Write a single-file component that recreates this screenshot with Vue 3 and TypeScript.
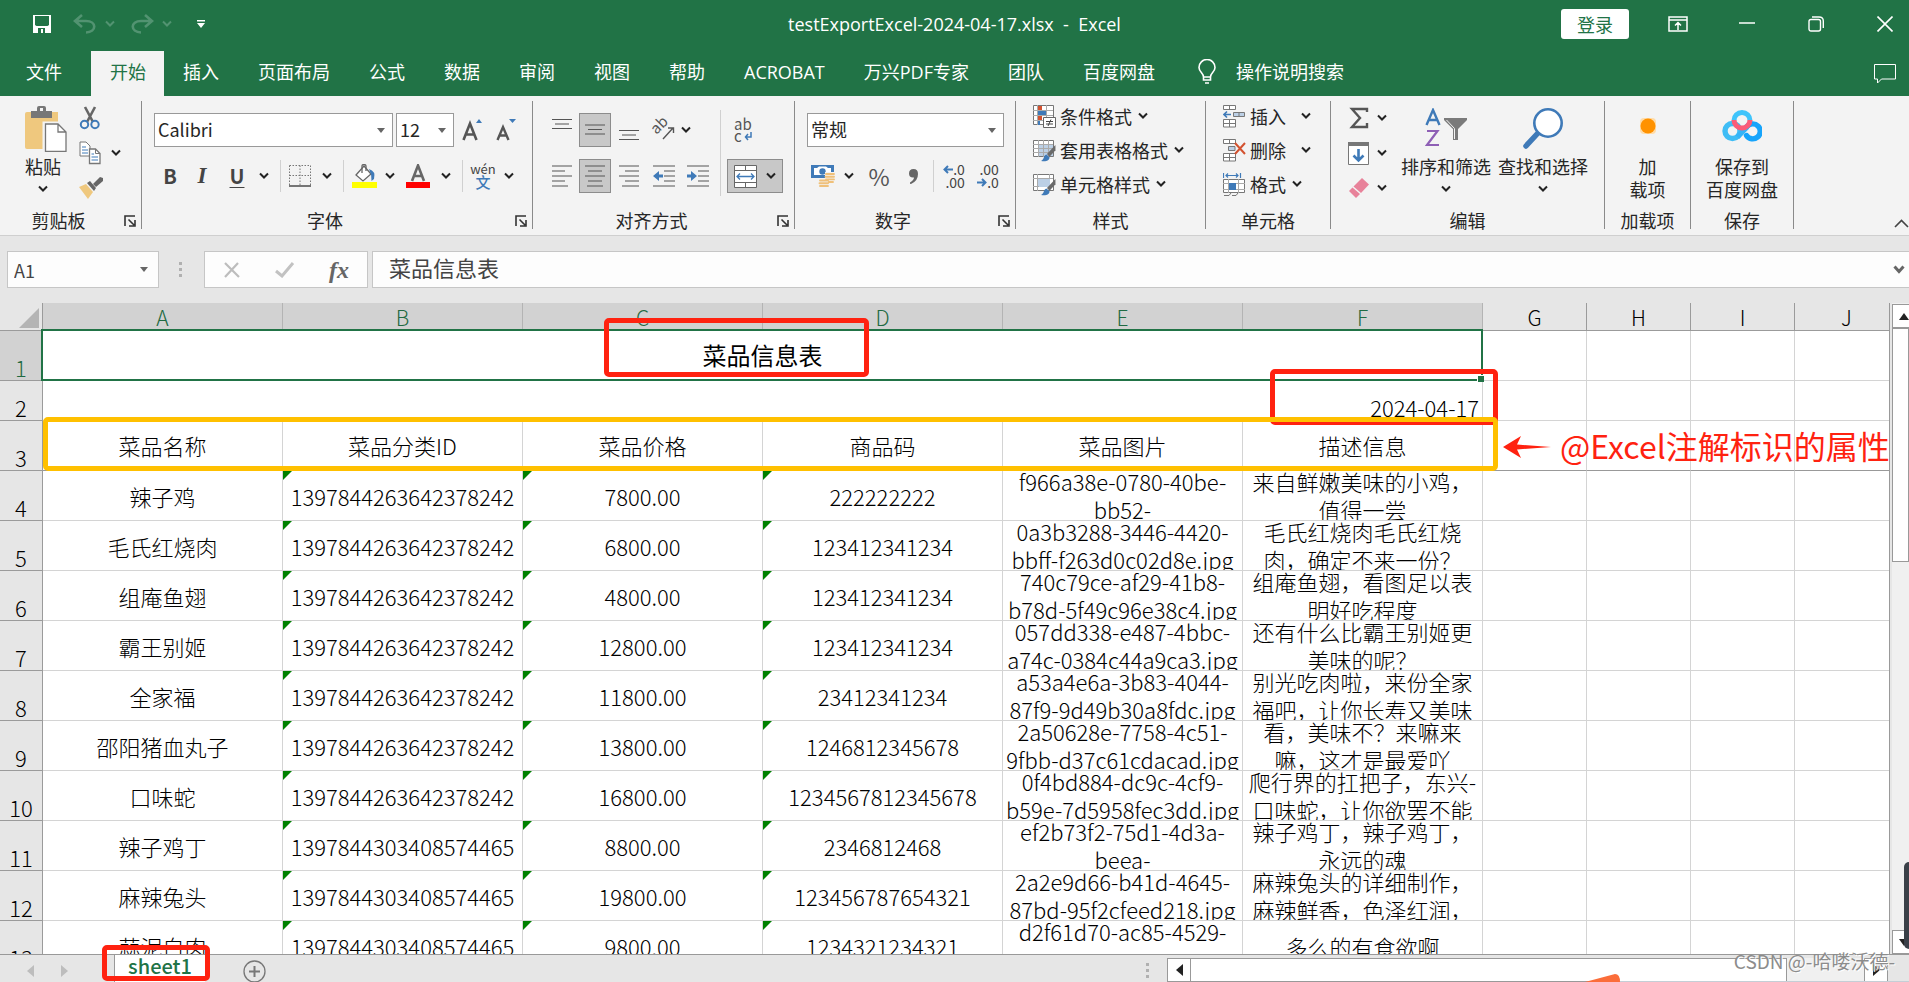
<script setup lang="ts">
interface Dish {
  row: number
  name: string
  category: string
  price: string
  code: string
  image: string[]
  note: string[]
}

const tabs: string[] = ['插入', '页面布局', '公式', '数据', '审阅', '视图', '帮助', 'ACROBAT', '万兴PDF专家', '团队', '百度网盘']
const selectedColumns: string[] = ['A', 'B', 'C', 'D', 'E', 'F']
const otherColumns: string[] = ['G', 'H', 'I', 'J']
const headings: string[] = ['菜品名称', '菜品分类ID', '菜品价格', '商品码', '菜品图片', '描述信息']

const first = '1397844263642378242'
const second = '1397844303408574465'

const dishes: Dish[] = [
  { row: 4, name: '辣子鸡', category: first, price: '7800.00', code: '222222222', image: ['f966a38e-0780-40be-', 'bb52-'], note: ['来自鲜嫩美味的小鸡，', '值得一尝'] },
  { row: 5, name: '毛氏红烧肉', category: first, price: '6800.00', code: '123412341234', image: ['0a3b3288-3446-4420-', 'bbff-f263d0c02d8e.jpg'], note: ['毛氏红烧肉毛氏红烧', '肉，确定不来一份？'] },
  { row: 6, name: '组庵鱼翅', category: first, price: '4800.00', code: '123412341234', image: ['740c79ce-af29-41b8-', 'b78d-5f49c96e38c4.jpg'], note: ['组庵鱼翅，看图足以表', '明好吃程度'] },
  { row: 7, name: '霸王别姬', category: first, price: '12800.00', code: '123412341234', image: ['057dd338-e487-4bbc-', 'a74c-0384c44a9ca3.jpg'], note: ['还有什么比霸王别姬更', '美味的呢？'] },
  { row: 8, name: '全家福', category: first, price: '11800.00', code: '23412341234', image: ['a53a4e6a-3b83-4044-', '87f9-9d49b30a8fdc.jpg'], note: ['别光吃肉啦，来份全家', '福吧，让你长寿又美味'] },
  { row: 9, name: '邵阳猪血丸子', category: first, price: '13800.00', code: '1246812345678', image: ['2a50628e-7758-4c51-', '9fbb-d37c61cdacad.jpg'], note: ['看，美味不？来嘛来', '嘛，这才是最爱吖'] },
  { row: 10, name: '口味蛇', category: first, price: '16800.00', code: '1234567812345678', image: ['0f4bd884-dc9c-4cf9-', 'b59e-7d5958fec3dd.jpg'], note: ['爬行界的扛把子，东兴-', '口味蛇，让你欲罢不能'] },
  { row: 11, name: '辣子鸡丁', category: second, price: '8800.00', code: '2346812468', image: ['ef2b73f2-75d1-4d3a-', 'beea-'], note: ['辣子鸡丁，辣子鸡丁，', '永远的魂'] },
  { row: 12, name: '麻辣兔头', category: second, price: '19800.00', code: '123456787654321', image: ['2a2e9d66-b41d-4645-', '87bd-95f2cfeed218.jpg'], note: ['麻辣兔头的详细制作，', '麻辣鲜香，色泽红润，'] },
  { row: 13, name: '蒜泥白肉', category: second, price: '9800.00', code: '1234321234321', image: ['d2f61d70-ac85-4529-'], note: ['多么的有食欲啊'] },
]
</script>

<template>
  <div class="window">
    <svg class="symbols" aria-hidden="true">
      <symbol id="chev" viewBox="0 0 10 8"><path d="M1 1.500 5 5.500 9 1.500" fill="none" stroke="currentColor" stroke-width="2" /></symbol>
      <symbol id="tri" viewBox="0 0 8 5"><path d="M0 0H8L4 5Z" fill="#666" /></symbol>
      <symbol id="launch" viewBox="0 0 12 12"><path d="M1 11V1H11M4.500 4.500 10 10M11 5V11H5" fill="none" stroke="#333" stroke-width="1.600" /></symbol>
      <symbol id="brush" viewBox="0 0 14 16"><path d="M13.500 0V5L8 11 5.500 8.500Z" fill="#6a6a6a" /><path d="M5 9 8 11.500C8 15 4 16 0 15 3 14 2 10 5 9Z" fill="#3f7ab8" /></symbol>
    </svg>

    <header class="titlebar">
      <div class="quick">
        <button class="plain save" aria-label="保存">
          <svg width="20" height="20" viewBox="0 0 20 20"><path d="M1 1H19V19H1Z" fill="#fff" /><path d="M3 2H17V11L15.500 12H4.500L3 11Z" fill="#217346" /><path d="M6 14H13V19H6Z" fill="#217346" /><path d="M9 15H11V19H9Z" fill="#fff" /></svg>
        </button>
        <button class="plain undo" aria-label="撤消">
          <svg width="24" height="20" viewBox="0 0 24 20"><path d="M9 1 2 7 9 13M2 7H13C24 7 24 18 13 18.500" fill="none" stroke="#529371" stroke-width="2.600" /></svg>
          <svg class="chev dim"><use href="#chev" /></svg>
        </button>
        <button class="plain redo" aria-label="恢复">
          <svg width="24" height="20" viewBox="0 0 24 20"><path d="M15 1 22 7 15 13M22 7H11C0 7 0 18 11 18.500" fill="none" stroke="#529371" stroke-width="2.600" /></svg>
          <svg class="chev dim"><use href="#chev" /></svg>
        </button>
        <button class="plain custom" aria-label="自定义快速访问工具栏">
          <svg width="8" height="8" viewBox="0 0 8 8"><path d="M0 0H8V1.500H0ZM0 3H8L4 8Z" fill="#fff" /></svg>
        </button>
      </div>
      <div class="doc">testExportExcel-2024-04-17.xlsx&nbsp; -&nbsp; Excel</div>
      <div class="controls">
        <button class="login">登录</button>
        <button class="plain ctl" aria-label="功能区显示选项">
          <svg width="20" height="16" viewBox="0 0 20 16"><path d="M1 1H19V15H1ZM1 4H19M10 14V7M7 9.500 10 6.500 13 9.500" fill="none" stroke="#fff" stroke-width="1.500" /></svg>
        </button>
        <button class="plain ctl" aria-label="最小化">
          <svg width="16" height="16" viewBox="0 0 16 16"><path d="M0 7H16" stroke="#fff" stroke-width="1.500" /></svg>
        </button>
        <button class="plain ctl" aria-label="还原">
          <svg width="16" height="16" viewBox="0 0 16 16" fill="none" stroke="#fff" stroke-width="1.400"><rect x="1" y="3.500" width="11.500" height="11.500" rx="2" /><path d="M4 1H11C14 1 15.300 2.500 15.300 5V12" /></svg>
        </button>
        <button class="plain ctl" aria-label="关闭">
          <svg width="16" height="16" viewBox="0 0 16 16"><path d="M0.500 0.500 15.500 15.500M15.500 0.500 0.500 15.500" stroke="#fff" stroke-width="1.600" /></svg>
        </button>
      </div>
    </header>

    <nav class="tabs">
      <button class="tab file">文件</button>
      <button class="tab active">开始</button>
      <button v-for="t in tabs" :key="t" class="tab">{{ t }}</button>
      <button class="tab tell">
        <svg width="18" height="25" viewBox="0 0 18 25" fill="none" stroke="#fff" stroke-width="1.600"><path d="M5.500 18C5.500 14 1 13 1 8.500A8 8 0 0 1 17 8.500C17 13 12.500 14 12.500 18ZM5.500 18V21H12.500V18M7 24H11" /></svg>
        <span>操作说明搜索</span>
      </button>
      <button class="plain comment" aria-label="批注">
        <svg width="22" height="20" viewBox="0 0 22 20"><path d="M0.500 0.500H21.500V15H7.500L3.500 19V15H0.500Z" fill="none" stroke="#fff" /></svg>
      </button>
    </nav>

    <section class="ribbon">
      <div class="group g-clip">
        <div class="body">
          <button class="big paste">
            <span class="pic"><svg width="42" height="46" viewBox="0 0 42 46"><path d="M2 6H33V43H2Q0 43 0 41V8Q0 6 2 6Z" fill="#efc87e" /><path d="M6 12V5H12V2Q12 0 14 0H19Q21 0 21 2V5H27V12Z" fill="#777" /><path d="M15 2H18V5H15Z" fill="#f3f3f3" /><path d="M19 17H33L41 25V45.500H19Z" fill="#fff" stroke="#f3f3f3" stroke-width="3" /><path d="M20.500 18H33L41 26V45.300H20.500ZM33 18V26H41" fill="#fff" stroke="#777" stroke-width="1.300" /></svg></span>
            <span>粘贴</span>
            <svg class="chev"><use href="#chev" /></svg>
          </button>
          <div class="stack clip-stack">
            <button class="plain" aria-label="剪切"><svg width="22" height="24" viewBox="0 0 22 24"><path d="M6 1 14 16M16 1 8 16" stroke="#666" stroke-width="2.600" /><circle cx="5.500" cy="18.500" r="3.700" fill="none" stroke="#3f7ab8" stroke-width="2" /><circle cx="16" cy="18.500" r="3.700" fill="none" stroke="#3f7ab8" stroke-width="2" /></svg></button>
            <button class="plain" aria-label="复制"><svg width="22" height="24" viewBox="0 0 22 24"><path d="M1 1H7L11 5V15H1Z" fill="#fff" stroke="#777" /><path d="M3 6H7M3 9H9M3 12H9" stroke="#3f7ab8" /><path d="M10.500 8H16.500L21 12.500V22.500H10.500Z" fill="#fff" stroke="#777" stroke-width="1.300" /><path d="M16.500 8V12.500H21" fill="none" stroke="#777" /><path d="M12.500 13H15M12.500 16H19M12.500 19H19" stroke="#3f7ab8" stroke-width="1.200" /></svg><svg class="chev"><use href="#chev" /></svg></button>
            <button class="plain" aria-label="格式刷"><svg width="24" height="22" viewBox="0 0 24 22"><path d="M0 10 7 7 14 15 9 22Z" fill="#efc87e" /><path d="M8 6 11 4 17 11 15 14Z" fill="#666" /><path d="M14 7 21 0 24 1V4L17 10Z" fill="#666" /></svg></button>
          </div>
        </div>
        <div class="caption"><span>剪贴板</span><svg class="launch"><use href="#launch" /></svg></div>
      </div>

      <div class="group g-font">
        <div class="body lines">
          <div class="row">
            <label class="combo family"><select aria-label="字体"><option>Calibri</option></select><svg class="tri"><use href="#tri" /></svg></label>
            <label class="combo size"><select aria-label="字号"><option>12</option></select><svg class="tri"><use href="#tri" /></svg></label>
            <button class="plain grow" aria-label="增大字号"><svg width="21" height="24" viewBox="0 0 21 24"><path d="M1.500 22 8 5.500 14.500 22M4 16.500H12" fill="none" stroke="#555" stroke-width="2.600" /><path d="M14 5 17 1 20 5Z" fill="#3f7ab8" /></svg></button>
            <button class="plain grow" aria-label="减小字号"><svg width="21" height="24" viewBox="0 0 21 24"><path d="M1.500 22 7 9 12.500 22M4 17.500H10" fill="none" stroke="#555" stroke-width="2.400" /><path d="M13 1H20L16.500 5Z" fill="#3f7ab8" /></svg></button>
          </div>
          <div class="font-tools">
            <button class="plain bold">B</button>
            <button class="plain italic">I</button>
            <button class="plain under">U</button>
            <svg class="chev"><use href="#chev" /></svg>
            <i class="bar"></i>
            <button class="plain" aria-label="边框"><svg width="22" height="22" viewBox="0 0 22 22"><path d="M0.500 0.500H21.500M0.500 10.500H21.500M0.500 0.500V20M11 0.500V20M21.500 0.500V20" fill="none" stroke="#777" stroke-dasharray="1.500 1.500" /><path d="M0 21H22" stroke="#555" stroke-width="1.600" /></svg></button>
            <svg class="chev"><use href="#chev" /></svg>
            <i class="bar"></i>
            <button class="plain" aria-label="填充颜色"><svg width="25" height="24" viewBox="0 0 25 24"><path d="M0 18H25V24H0Z" fill="#ff0" /><path d="M12 2 19 10 11 17 4 11Z" fill="#fff" stroke="#666" stroke-width="1.300" /><path d="M10 9V2Q10 0.500 12 0.500T14 2V7" fill="none" stroke="#666" stroke-width="1.300" /><path d="M17 5Q24 7 22 15L19.500 17Q20 11 17 5Z" fill="#3f7ab8" /></svg></button>
            <svg class="chev"><use href="#chev" /></svg>
            <button class="plain" aria-label="字体颜色"><svg width="24" height="24" viewBox="0 0 24 24"><path d="M6 17 12 1.500 18 17M8 12H16" fill="none" stroke="#666" stroke-width="2.600" /><path d="M0 18H24V24H0Z" fill="#f00" /></svg></button>
            <svg class="chev"><use href="#chev" /></svg>
            <i class="bar"></i>
            <button class="plain pinyin"><span>wén</span><b>文</b></button>
            <svg class="chev"><use href="#chev" /></svg>
          </div>
        </div>
        <div class="caption"><span>字体</span><svg class="launch"><use href="#launch" /></svg></div>
      </div>

      <div class="group g-align">
        <div class="body">
          <div class="align-tools">
            <button class="plain" aria-label="顶端对齐"><svg width="20" height="24" viewBox="0 0 20 24"><path d="M0 1.500H20M3 6H17M0 10.500H20" stroke="#555" stroke-width="1.200" /></svg></button>
            <button class="on" aria-label="垂直居中"><svg width="20" height="24" viewBox="0 0 20 24"><path d="M0 7H20M3 11.500H17M0 16H20" stroke="#555" stroke-width="1.200" /></svg></button>
            <button class="plain" aria-label="底端对齐"><svg width="20" height="24" viewBox="0 0 20 24"><path d="M0 12.500H20M3 17H17M0 21.500H20" stroke="#555" stroke-width="1.200" /></svg></button>
            <button class="plain" aria-label="方向"><svg class="orient" width="22" height="22" viewBox="0 0 22 22"><text x="4" y="15" font-size="15" fill="#555" transform="rotate(-45 5 16)">ab</text><path d="M10 20 20 9M15 9H20.500V14" fill="none" stroke="#555" stroke-width="1.400" /></svg></button>
            <svg class="chev near"><use href="#chev" /></svg>
            <button class="plain" aria-label="左对齐"><svg width="20" height="22" viewBox="0 0 20 22"><path d="M0 1H20M0 6H13M0 11H20M0 16H13M0 21H16" stroke="#555" stroke-width="1.200" /></svg></button>
            <button class="on" aria-label="居中"><svg width="20" height="22" viewBox="0 0 20 22"><path d="M0 1H20M3 6H17M0 11H20M3 16H17M2 21H18" stroke="#555" stroke-width="1.200" /></svg></button>
            <button class="plain" aria-label="右对齐"><svg width="20" height="22" viewBox="0 0 20 22"><path d="M0 1H20M6 6H20M0 11H20M6 16H20M3 21H20" stroke="#555" stroke-width="1.200" /></svg></button>
            <button class="plain" aria-label="减少缩进"><svg width="22" height="22" viewBox="0 0 22 22"><path d="M0 1H22M11 6H22M11 11H22M11 16H22M0 21H22" stroke="#555" stroke-width="1.200" /><path d="M0 11 6 6V9.500H10V12.500H6V16Z" fill="#3f7ab8" /></svg></button>
            <button class="plain" aria-label="增加缩进"><svg width="22" height="22" viewBox="0 0 22 22"><path d="M0 1H22M11 6H22M11 11H22M11 16H22M0 21H22" stroke="#555" stroke-width="1.200" /><path d="M10 11 4 6V9.500H0V12.500H4V16Z" fill="#3f7ab8" /></svg></button>
          </div>
          <i class="bar tall"></i>
          <div class="wrap-tools">
            <button class="plain wrap" aria-label="自动换行"><span>ab</span><span>c<svg width="8" height="9" viewBox="0 0 8 9"><path d="M7 0V5H2M4 2 1.500 5 4 8" fill="none" stroke="#3f7ab8" stroke-width="1.500" /></svg></span></button>
            <button class="on merge" aria-label="合并后居中"><svg width="23" height="23" viewBox="0 0 23 23"><path d="M0.500 0.500H22.500V22.500H0.500Z" fill="#fff" stroke="#666" /><path d="M0 5.500H23M0 17.500H23M11.500 0V5.500M11.500 17.500V23" stroke="#666" /><path d="M3 11.500H20M6 8.500 3 11.500 6 14.500M17 8.500 20 11.500 17 14.500" fill="none" stroke="#3f7ab8" stroke-width="1.300" /></svg><svg class="chev"><use href="#chev" /></svg></button>
          </div>
        </div>
        <div class="caption"><span>对齐方式</span><svg class="launch"><use href="#launch" /></svg></div>
      </div>

      <div class="group g-num">
        <div class="body lines">
          <label class="combo number"><select aria-label="数字格式"><option>常规</option></select><svg class="tri"><use href="#tri" /></svg></label>
          <div class="num-tools">
            <button class="plain" aria-label="会计数字格式"><svg width="24" height="24" viewBox="0 0 24 24"><path d="M0 1H23V14H0Z" fill="#3f7ab8" /><path d="M3 4H6L8 2.500H15L17 4H20V11H3Z" fill="#fff" /><circle cx="11.500" cy="7.500" r="3.200" fill="#3f7ab8" /><path d="M14 8H24V19H18V24H7V14.500H14Z" fill="#f3f3f3" /><path d="M15 10H23M14.500 12.700H23M15 15.400H23M18 18H22M9 16.500H17M8.500 19.300H17M9 22H17" stroke="#efc07a" stroke-width="1.900" stroke-linecap="round" /></svg></button>
            <svg class="chev"><use href="#chev" /></svg>
            <button class="plain percent">%</button>
            <button class="plain" aria-label="千位分隔样式"><svg width="9" height="15" viewBox="0 0 9 15"><path d="M4.500 0Q9 0 9 5 9 12 2 15 0.500 15 1 13.500 5 11 5 8.500 0 9 0 4.500 0 0 4.500 0Z" fill="#666" /></svg></button>
            <i class="bar"></i>
            <button class="plain decimals" aria-label="增加小数位数"><span><svg width="10" height="9" viewBox="0 0 10 9"><path d="M10 4.500H2M5 1 1.500 4.500 5 8" fill="none" stroke="#3f7ab8" stroke-width="2" /></svg>.0</span><span>.00</span></button>
            <button class="plain decimals" aria-label="减少小数位数"><span>.00</span><span><svg width="10" height="9" viewBox="0 0 10 9"><path d="M0 4.500H8M5 1 8.500 4.500 5 8" fill="none" stroke="#3f7ab8" stroke-width="2" /></svg>.0</span></button>
          </div>
        </div>
        <div class="caption"><span>数字</span><svg class="launch"><use href="#launch" /></svg></div>
      </div>

      <div class="group g-style">
        <div class="body list">
          <button class="item"><svg width="23" height="23" viewBox="0 0 23 23"><path d="M0.500 0.500H20.500V19.500H0.500Z" fill="#fff" stroke="#777" /><path d="M4.500 0V20M13.500 0V20M0 5.500H20M0 10.500H20M0 15.500H20" stroke="#aaa" /><path d="M5 1H9V5H5ZM5 11H9V15H5Z" fill="#d35230" /><path d="M5 6H13V10H5ZM5 16H7V20H5Z" fill="#3f7ab8" /><path d="M10.500 12.500H22.500V22.500H10.500Z" fill="#fff" stroke="#666" /><path d="M13 16.500H20M13 19H20M18 14.500 15 21" stroke="#444" /></svg>条件格式<svg class="chev"><use href="#chev" /></svg></button>
          <button class="item"><svg width="23" height="23" viewBox="0 0 23 23"><path d="M0.500 1.500H20.500V17.500H0.500Z" fill="#fff" stroke="#777" /><path d="M6 6H20V17H6Z" fill="#bcd0e6" /><path d="M5.500 1V18M10.500 1V18M15.500 1V18M0 5.500H20M0 9.500H20M0 13.500H20" stroke="#aaa" /><use href="#brush" x="8" y="6" width="15" height="17" /></svg>套用表格格式<svg class="chev"><use href="#chev" /></svg></button>
          <button class="item"><svg width="23" height="23" viewBox="0 0 23 23"><path d="M0.500 1.500H20.500V17.500H0.500Z" fill="#fff" stroke="#777" /><path d="M5 5H17V14H5Z" fill="#bcd0e6" /><path d="M4.500 1V18M16.500 1V5M0 5.500H20M0 13.500H6" stroke="#aaa" /><use href="#brush" x="8" y="6" width="15" height="17" /></svg>单元格样式<svg class="chev"><use href="#chev" /></svg></button>
        </div>
        <div class="caption"><span>样式</span></div>
      </div>

      <div class="group g-cell">
        <div class="body list">
          <button class="item"><svg width="23" height="23" viewBox="0 0 23 23"><path d="M0.500 0.500H12.500V4.500H0.500ZM6.500 0V5M0.500 14.500H12.500V22H0.500ZM6.500 14V22M0.500 18.500H12.500" fill="#fff" stroke="#777" /><path d="M10.500 7.500H21.500V11.500H10.500Z" fill="#bcd0e6" stroke="#777" /><path d="M16 7V12" stroke="#777" /><path d="M8 9.500H1M4 6.500 1 9.500 4 12.500" fill="none" stroke="#3f7ab8" stroke-width="1.600" /></svg>插入<svg class="chev far"><use href="#chev" /></svg></button>
          <button class="item"><svg width="23" height="23" viewBox="0 0 23 23"><path d="M0.500 0.500H12.500V4.500H0.500ZM6.500 0V5M0.500 14.500H12.500V22H0.500ZM6.500 14V22M0.500 18.500H12.500" fill="#fff" stroke="#777" /><path d="M5.500 7.500H12V11.500H5.500Z" fill="#bcd0e6" stroke="#777" /><path d="M12 4 22 15M22 4 12 15" stroke="#d35230" stroke-width="2" /></svg>删除<svg class="chev far"><use href="#chev" /></svg></button>
          <button class="item"><svg width="23" height="23" viewBox="0 0 23 23"><path d="M0.500 6.500H21.500V19.500H0.500Z" fill="#fff" stroke="#777" /><path d="M5.500 6V20M15.500 6V20M0 10.500H22M0 16.500H22" stroke="#aaa" /><path d="M6 10H13V17H6Z" fill="#3f7ab8" /><path d="M0.500 0V5M17.500 0V5M3 2.500H15M5 0.500 3 2.500 5 4.500M13 0.500 15 2.500 13 4.500" fill="none" stroke="#3f7ab8" stroke-width="1.200" /><path d="M1 22.500H6L8 20M9 22.500H13L15 20" fill="none" stroke="#777" /></svg>格式<svg class="chev"><use href="#chev" /></svg></button>
        </div>
        <div class="caption"><span>单元格</span></div>
      </div>

      <div class="group g-edit">
        <div class="body">
          <div class="stack edit-stack">
            <button class="plain" aria-label="自动求和"><svg width="22" height="22" viewBox="0 0 22 22"><path d="M19 5V2H4L12 11 4 20H19V16" fill="none" stroke="#555" stroke-width="2.400" /></svg><svg class="chev"><use href="#chev" /></svg></button>
            <button class="plain" aria-label="填充"><svg width="22" height="23" viewBox="0 0 22 23"><path d="M0.500 0.500H20.500V22.500H0.500Z" fill="#fff" stroke="#777" /><path d="M0 0H21V4H0Z" fill="#777" /><path d="M10.500 7V18M5.500 13.500 10.500 18.500 15.500 13.500" fill="none" stroke="#3f7ab8" stroke-width="2.600" /></svg><svg class="chev"><use href="#chev" /></svg></button>
            <button class="plain" aria-label="清除"><svg width="22" height="22" viewBox="0 0 22 22"><path d="M14 1 21 7.500 13 16 5.500 9.500Z" fill="#e8829a" /><path d="M4.500 10.500 12 17 8 21 1 14Z" fill="#e8829a" /></svg><svg class="chev"><use href="#chev" /></svg></button>
          </div>
          <button class="big sort">
            <span class="pic"><svg width="42" height="40" viewBox="0 0 42 40"><path d="M1.500 17 8 2 14.500 17M4 12H12" fill="none" stroke="#3f7ab8" stroke-width="2.400" /><path d="M2 23H12.500L2 37H14" fill="none" stroke="#8e5fb5" stroke-width="2.200" /><path d="M19 10H42V12L33 21V32H28V21L19 12Z" fill="#7a7a7a" /><path d="M21.500 12 29.500 20.500V31" fill="none" stroke="#f3f3f3" /></svg></span>
            <span>排序和筛选</span>
            <svg class="chev"><use href="#chev" /></svg>
          </button>
          <button class="big">
            <span class="pic"><svg width="40" height="41" viewBox="0 0 40 41"><path d="M3 38 15 25" stroke="#3f7ab8" stroke-width="5.500" stroke-linecap="round" /><circle cx="25" cy="15" r="13.700" fill="#fff" stroke="#3f7ab8" stroke-width="2.600" /></svg></span>
            <span>查找和选择</span>
            <svg class="chev"><use href="#chev" /></svg>
          </button>
        </div>
        <div class="caption"><span>编辑</span></div>
      </div>

      <div class="group g-add">
        <div class="body center">
          <button class="big"><span class="pic"><svg width="18" height="18" viewBox="0 0 18 18"><rect x="1" y="1" width="16" height="16" rx="4" fill="#ffdca8" /><circle cx="9" cy="9" r="7.500" fill="#ff9200" /></svg></span><span>加<br />载项</span></button>
        </div>
        <div class="caption"><span>加载项</span></div>
      </div>

      <div class="group g-save">
        <div class="body center">
          <button class="big">
            <span class="pic"><svg width="40" height="32" viewBox="0 0 40 32" fill="none" stroke-width="5.400"><circle cx="10.500" cy="21" r="7.500" stroke="#3fbdf5" /><path d="M15.500 27 25 17" stroke="#35b4f7" /><path d="M25 16.500A7.500 7.500 0 1 1 24.500 25.500" stroke="#16a4fb" stroke-linecap="round" /><path d="M12 10.500A8 8 0 1 1 28 10.500" stroke="#3fc4fb" stroke-width="5" /><path d="M12 10A8 8 0 0 0 28 10" stroke="#fb5b78" stroke-width="5" /></svg></span>
            <span>保存到<br />百度网盘</span>
          </button>
        </div>
        <div class="caption"><span>保存</span></div>
      </div>

      <button class="plain collapse" aria-label="折叠功能区"><svg width="15" height="9" viewBox="0 0 15 9"><path d="M1 8 7.500 1.500 14 8" fill="none" stroke="#444" stroke-width="1.600" /></svg></button>
    </section>

    <section class="formula">
      <label class="namebox"><input value="A1" aria-label="名称框" /><svg class="tri"><use href="#tri" /></svg></label>
      <i class="grip"></i>
      <div class="fx">
        <button class="plain" aria-label="取消"><svg width="18" height="16" viewBox="0 0 18 16"><path d="M2 1 16 15M15 1 2 15" stroke="#bdbdbd" stroke-width="2.200" /></svg></button>
        <button class="plain" aria-label="输入"><svg width="20" height="16" viewBox="0 0 20 16"><path d="M1 9 7 14 18 1" fill="none" stroke="#c2c2c2" stroke-width="3" /></svg></button>
        <button class="plain fn">fx</button>
      </div>
      <label class="entry"><input value="菜品信息表" aria-label="编辑栏" /><svg width="12" height="9" viewBox="0 0 12 9"><path d="M1.500 1.500 6 6.500 10.500 1.500" fill="none" stroke="#666" stroke-width="3" /></svg></label>
    </section>

    <main class="sheet">
      <div class="grid">
        <table>
          <colgroup>
            <col class="c-head" />
            <col v-for="c in selectedColumns" :key="c" class="c-wide" />
            <col v-for="c in otherColumns" :key="c" class="c-std" />
          </colgroup>
          <thead>
            <tr>
              <th class="corner"><svg width="20" height="20" viewBox="0 0 20 20"><path d="M20 0V20H0Z" fill="#b4b4b4" /></svg></th>
              <th v-for="c in selectedColumns" :key="c" class="col picked">{{ c }}</th>
              <th v-for="c in otherColumns" :key="c" class="col">{{ c }}</th>
            </tr>
          </thead>
          <tbody>
            <tr class="r50">
              <th class="rowno picked">1</th>
              <td colspan="6" class="active-cell">菜品信息表<i class="handle"></i></td>
              <td v-for="c in otherColumns" :key="c"></td>
            </tr>
            <tr class="r40">
              <th class="rowno">2</th>
              <td colspan="6" class="date">2024-04-17</td>
              <td v-for="c in otherColumns" :key="c"></td>
            </tr>
            <tr class="r50 frozen">
              <th class="rowno">3</th>
              <td v-for="h in headings" :key="h">{{ h }}</td>
              <td v-for="c in otherColumns" :key="c"></td>
            </tr>
            <tr v-for="d in dishes" :key="d.row" class="r50">
              <th class="rowno">{{ d.row }}</th>
              <td>{{ d.name }}</td>
              <td class="flag">{{ d.category }}</td>
              <td class="flag">{{ d.price }}</td>
              <td class="flag">{{ d.code }}</td>
              <td class="multi"><div><p v-for="l in d.image" :key="l">{{ l }}</p></div></td>
              <td :class="{ multi: d.note.length > 1 }"><div><p v-for="l in d.note" :key="l">{{ l }}</p></div></td>
              <td v-for="c in otherColumns" :key="c"></td>
            </tr>
          </tbody>
        </table>
      </div>
      <div class="vscroll">
        <button class="sb up" aria-label="向上滚动"><svg width="10" height="7" viewBox="0 0 10 7"><path d="M0 7 5 0 10 7Z" fill="#222" /></svg></button>
        <div class="vthumb"></div>
        <button class="sb down" aria-label="向下滚动"><svg width="10" height="7" viewBox="0 0 10 7"><path d="M0 0H10L5 7Z" fill="#222" /></svg></button>
      </div>
    </main>

    <footer class="sheetbar">
      <button class="plain nav" aria-label="上一张"><svg width="7" height="12" viewBox="0 0 7 12"><path d="M7 0V12L0 6Z" fill="#bdbdbd" /></svg></button>
      <button class="plain nav" aria-label="下一张"><svg width="7" height="12" viewBox="0 0 7 12"><path d="M0 0V12L7 6Z" fill="#bdbdbd" /></svg></button>
      <button class="sheet-tab">sheet1</button>
      <button class="plain add" aria-label="新工作表"><svg width="23" height="23" viewBox="0 0 23 23" fill="none" stroke="#777"><circle cx="11.500" cy="11.500" r="10.500" stroke-width="1.300" /><path d="M6 11.500H17M11.500 6V17" stroke-width="2" /></svg></button>
      <i class="grip low"></i>
      <div class="hscroll">
        <button class="sb" aria-label="向左滚动"><svg width="7" height="12" viewBox="0 0 7 12"><path d="M7 0V12L0 6Z" fill="#222" /></svg></button>
        <div class="hthumb"></div>
        <div class="htrack"></div>
        <button class="sb" aria-label="向右滚动"><svg width="7" height="12" viewBox="0 0 7 12"><path d="M0 0V12L7 6Z" fill="#222" /></svg></button>
      </div>
    </footer>

    <div class="mark red m-title"></div>
    <div class="mark red m-date"></div>
    <div class="mark yellow m-head"></div>
    <div class="mark red m-sheet"></div>
    <div class="remark">
      <svg width="48" height="22" viewBox="0 0 48 22"><path d="M0 11 18 0 14 8.500 48 11 14 13.500 18 22Z" fill="#ff2210" /></svg>
      <span>@Excel注解标识的属性</span>
    </div>
    <div class="edge-handle"></div>
    <svg class="corner-note" width="324" height="8" viewBox="0 0 324 8"><path d="M0 8 30 0Q35 0 35 8Z" fill="#fb6d3a" /><path d="M35 7.500H324" stroke="#c5ced6" /></svg>
    <div class="watermark">CSDN @-哈喽沃德-</div>
  </div>
</template>

<style>
body {
  margin: 0;
  overflow: hidden;
}
</style>

<style scoped>
.window {
  position: relative;
  display: flex;
  flex-direction: column;
  width: 100%;
  height: 100vh;
  overflow: hidden;
  background: #e6e6e6;
  color: #262626;
  font: 18px/24px "Noto Sans CJK SC", sans-serif;
}
.window *,
.window {
  box-sizing: border-box;
}
.symbols {
  position: absolute;
  width: 0;
  height: 0;
}
button,
input,
select {
  margin: 0;
  padding: 0;
  border: 0;
  outline: 0;
  background: none;
  color: inherit;
  font: inherit;
}
svg {
  display: block;
  flex: none;
}
p {
  margin: 0;
}
.plain {
  display: flex;
  align-items: center;
  justify-content: center;
}
.chev {
  width: 10px;
  height: 8px;
  color: #222;
}
.chev.dim {
  color: #529371;
}
.tri {
  width: 8px;
  height: 5px;
}

/* title bar */
.titlebar {
  display: grid;
  grid-template-columns: 1fr auto 1fr;
  align-items: center;
  flex: none;
  height: 51px;
  padding-bottom: 3px;
  background: #217346;
  color: #fff;
}
.doc {
  font-family: "Open Sans", "Noto Sans CJK SC", sans-serif;
}
.quick {
  display: flex;
  align-items: center;
  padding-left: 32px;
}
.undo,
.redo {
  gap: 8px;
}
.undo {
  margin-left: 21px;
}
.redo {
  margin-left: 15px;
}
.custom {
  margin-left: 25px;
}
.controls {
  display: flex;
  justify-content: flex-end;
  align-items: center;
}
.login {
  width: 68px;
  height: 30px;
  margin-right: 14px;
  padding-bottom: 1px;
  border-radius: 3px;
  background: #fff;
  color: #217346;
}
.ctl {
  width: 69px;
  height: 46px;
}
.ctl:last-child {
  width: 48px;
  margin-left: 11px;
}

/* tabs */
.tabs {
  display: flex;
  flex: none;
  height: 45px;
  background: #217346;
  font-family: "Open Sans", "Noto Sans CJK SC", sans-serif;
}
.tab {
  padding: 0 20px 4px 19px;
  color: #fff;
  white-space: nowrap;
}
.file {
  width: 91px;
  padding: 0 26px 4px;
  text-align: left;
}
.active {
  padding-right: 18px;
  background: #f3f3f3;
  color: #217346;
}
.tell {
  display: flex;
  align-items: center;
  gap: 20px;
  margin-left: 4px;
}
.comment {
  margin-left: auto;
  margin-right: 13px;
}

/* ribbon */
.ribbon {
  display: flex;
  flex: none;
  height: 140px;
  padding: 5px 0 6px;
  border-bottom: 1px solid #cfcfcf;
  background: #f3f3f3;
}
.group {
  display: flex;
  flex-direction: column;
  flex: none;
  border-right: 1px solid #8a8a8a;
}
.body {
  display: flex;
  flex: 1;
  min-height: 0;
}
.caption {
  display: flex;
  align-items: center;
  flex: none;
  height: 18px;
  padding-right: 5px;
}
.caption span {
  flex: 1;
  text-align: center;
}
.launch {
  width: 12px;
  height: 12px;
  margin: 2px 0 0 7px;
}
.g-clip {
  width: 142px;
}
.g-font {
  width: 391px;
}
.g-align {
  width: 262px;
}
.g-num {
  width: 221px;
}
.g-style {
  width: 190px;
}
.g-cell {
  width: 125px;
}
.g-edit {
  width: 274px;
}
.g-add {
  width: 86px;
}
.g-save {
  width: 103px;
}
.g-style .caption,
.g-cell .caption,
.g-edit .caption,
.g-add .caption,
.g-save .caption {
  padding-right: 0;
}
.big {
  display: flex;
  flex-direction: column;
  align-items: center;
  line-height: 23px;
}
.pic {
  display: flex;
  align-items: center;
  justify-content: center;
  height: 54px;
}
.big .chev {
  margin-top: 7px;
}
.g-add .pic,
.g-save .pic {
  height: 50px;
  margin-bottom: 4px;
}
.paste {
  width: 52px;
  margin-left: 17px;
}
.paste .pic {
  height: 56px;
  margin-bottom: -2px;
  padding-left: 6px;
}
.sort {
  width: 90px;
  margin: 0 7px 0 14px;
}
.center {
  justify-content: center;
}
.stack {
  display: flex;
  flex-direction: column;
  gap: 11px;
  padding-top: 5px;
}
.stack button {
  height: 24px;
  justify-content: flex-start;
}
.clip-stack {
  padding-left: 10px;
}
.clip-stack .chev {
  margin-left: 10px;
}
.edit-stack {
  padding-left: 17px;
}
.edit-stack .chev {
  margin-left: 7px;
}
.lines {
  flex-direction: column;
  gap: 12px;
  padding: 12px 0 0 12px;
}
.row {
  display: flex;
  align-items: center;
}
.combo {
  position: relative;
  display: block;
  height: 34px;
  border: 1px solid #999;
  background: #fff;
}
.combo select {
  width: 100%;
  height: 100%;
  padding: 0 0 2px 3px;
  appearance: none;
}
.combo .tri {
  position: absolute;
  top: 14px;
  right: 7px;
}
.family {
  width: 239px;
}
.size {
  width: 58px;
  margin-left: 3px;
}
.number {
  width: 197px;
}
.grow {
  margin-left: 8px;
  width: 21px;
}
.grow + .grow {
  margin-left: 13px;
}
.font-tools {
  display: grid;
  grid-template-columns: 32px 32px 38px 16px 16px 24px 30px 2px 40px 12px 44px 12px 20px 22px 30px;
  align-items: center;
  justify-items: center;
  height: 34px;
}
.bar {
  width: 1px;
  height: 32px;
  background: #d0d0d0;
}
.bold,
.under {
  color: #444;
  font-weight: 700;
  font-size: 20px;
}
.under {
  text-decoration: underline;
  text-decoration-thickness: 1px;
  text-underline-offset: 3px;
}
.italic {
  color: #444;
  font: italic 700 23px/24px "Liberation Serif", serif;
}
.pinyin {
  flex-direction: column;
  color: #444;
  font-size: 13px;
  line-height: 11px;
}
.pinyin b {
  color: #3f7ab8;
  font-size: 15px;
  line-height: 15px;
  font-weight: 500;
}
.align-tools {
  display: grid;
  grid-template-columns: 35px 32px 36px 34px 34px;
  grid-auto-rows: 34px;
  row-gap: 12px;
  align-items: center;
  justify-items: center;
  padding: 12px 0 0 11px;
  box-sizing: content-box;
}
.near {
  justify-self: start;
}
.orient {
  overflow: visible;
}
.on {
  display: flex;
  align-items: center;
  justify-content: center;
  width: 32px;
  height: 34px;
  border: 1px solid #8c8c8c;
  background: #c8c8c8;
}
.bar.tall {
  height: 86px;
  margin: 9px 6px 0 5px;
}
.wrap-tools {
  display: flex;
  flex-direction: column;
  gap: 12px;
  padding-top: 12px;
}
.wrap {
  flex-direction: column;
  align-items: flex-start;
  width: 32px;
  height: 34px;
  padding-left: 7px;
  color: #555;
  font-size: 15px;
  line-height: 12px;
}
.wrap span {
  display: flex;
  align-items: center;
  gap: 2px;
}
.merge {
  width: 56px;
  gap: 9px;
}
.num-tools {
  display: grid;
  grid-template-columns: 32px 20px 40px 28px 12px 30px 38px;
  align-items: center;
  justify-items: center;
  height: 34px;
}
.percent {
  color: #555;
  font-size: 23px;
}
.decimals {
  flex-direction: column;
  align-items: flex-end;
  color: #444;
  font-size: 14px;
  line-height: 13px;
}
.decimals span {
  display: flex;
  align-items: center;
}
.list {
  flex-direction: column;
  padding: 0 0 0 17px;
}
.item {
  display: flex;
  align-items: center;
  gap: 4px;
  height: 34px;
  padding-bottom: 4px;
}
.item .chev {
  margin-left: 2px;
}
.item .far {
  margin-left: 11px;
}
.collapse {
  align-self: flex-end;
  margin-left: auto;
  height: 12px;
}

/* formula bar */
.formula {
  display: flex;
  flex: none;
  height: 67px;
  padding: 15px 0;
}
.namebox,
.fx,
.entry {
  display: flex;
  align-items: center;
  height: 37px;
  border: 1px solid #c6c6c6;
  background: #fdfdfd;
}
.namebox {
  width: 152px;
  margin-left: 7px;
  padding: 0 10px 0 6px;
  color: #444;
}
.namebox input,
.entry input {
  flex: 1;
  min-width: 0;
}
.entry input {
  padding-bottom: 5px;
}
.grip {
  width: 3px;
  height: 15px;
  margin: 11px 22px 0 20px;
  background: repeating-linear-gradient(#b0b0b0 0 3px, transparent 3px 6px);
}
.fx {
  justify-content: space-between;
  width: 164px;
  padding: 0 18px;
}
.fn {
  color: #666;
  font: italic 700 24px/24px "Liberation Serif", serif;
}
.entry {
  flex: 1;
  margin-left: 4px;
  padding: 0 4px 0 16px;
  border-right: 0;
  color: #444;
  font-size: 22px;
}

/* sheet */
.sheet {
  display: flex;
  flex: 1;
  min-height: 0;
}
.grid {
  flex: 1;
  overflow: hidden;
  border-right: 1px solid #999;
  background: linear-gradient(#e6e6e6 27px, #fff 27px);
}
table {
  width: 1899px;
  border-spacing: 0;
  table-layout: fixed;
  color: #000;
  font-size: 22px;
  font-weight: 300;
  line-height: 28px;
}
.c-head {
  width: 43px;
}
.c-wide {
  width: 240px;
}
.c-std {
  width: 104px;
}
th,
td {
  padding: 0;
  border: 0 solid #d4d4d4;
  border-width: 0 1px 1px 0;
  font-weight: inherit;
  white-space: nowrap;
}
td {
  position: relative;
  text-align: center;
  overflow: hidden;
}
th {
  background: #e6e6e6;
}
.col {
  height: 28px;
  padding-top: 2px;
  border-color: #9b9b9b;
  font-size: 21px;
  line-height: 25px;
}
.corner {
  border-color: #9b9b9b;
  padding: 3px 3px 0 19px;
}
.picked {
  background: #d2d2d2;
  color: #1f6a42;
}
.col.picked {
  border-color: #b4b4b4;
}
.r50 > * {
  height: 50px;
}
.r40 > * {
  height: 40px;
}
.rowno {
  padding-bottom: 1px;
  border-color: #9b9b9b;
  vertical-align: bottom;
  line-height: 23px;
}
.frozen td {
  padding-bottom: 2px;
  border-bottom-color: #999;
}
.active-cell {
  overflow: visible;
  padding-bottom: 2px;
  font-size: 24px;
  font-weight: 400;
}
.active-cell::after {
  content: "";
  position: absolute;
  z-index: 1;
  inset: -2px -1px -1px -2px;
  border: 2px solid #217346;
}
.handle {
  position: absolute;
  z-index: 2;
  right: -2px;
  bottom: -2px;
  width: 7px;
  height: 7px;
  border: 0 solid #fff;
  border-width: 1px 0 0 1px;
  background: #217346;
}
.date {
  padding-right: 3px;
  text-align: right;
  vertical-align: bottom;
  line-height: 25px;
}
.flag::before {
  content: "";
  position: absolute;
  top: 0;
  left: 0;
  border-top: 9px solid #008000;
  border-right: 9px solid transparent;
}
.multi div {
  height: 49px;
  overflow: hidden;
}
.multi p:first-child {
  margin-top: -4px;
}
.vscroll {
  display: flex;
  flex-direction: column;
  width: 17px;
  margin-left: 2px;
  padding-top: 1px;
  background: #f0f0f0;
}
.sb {
  display: flex;
  align-items: center;
  justify-content: center;
  flex: none;
  width: 24px;
  height: 24px;
  border: 1px solid #999;
  background: #fff;
}
.vthumb {
  height: 36%;
  border: 1px solid #999;
  background: #fff;
}
.down {
  margin-top: auto;
}

/* sheet bar */
.sheetbar {
  display: flex;
  flex: none;
  height: 28px;
  border-top: 1px solid #999;
}
.nav {
  width: 7px;
  height: 32px;
  margin-left: 27px;
}
.sheet-tab {
  width: 91px;
  margin-left: 46px;
  padding-bottom: 5px;
  border-left: 1px solid #999;
  background: #fff;
  color: #217346;
  font-weight: 500;
  font-size: 20px;
  line-height: 22px;
}
.add {
  width: 23px;
  height: 32px;
  margin-left: 38px;
}
.low {
  margin: 8px 18px 0 auto;
}
.hscroll {
  display: flex;
  width: 721px;
  height: 24px;
  margin-top: 3px;
  margin-right: 21px;
}
.hthumb {
  flex: 1;
  border: 1px solid #999;
  border-left: 0;
  background: #fff;
}
.htrack {
  width: 77px;
  background: #f0f0f0;
}

/* notes drawn over the window */
.mark {
  position: absolute;
  z-index: 3;
  border: 5px solid #ff2210;
  border-radius: 5px;
}
.yellow {
  border-color: #ffc000;
}
.m-title {
  left: 604px;
  top: 318px;
  width: 265px;
  height: 59px;
}
.m-date {
  left: 1270px;
  top: 369px;
  width: 228px;
  height: 56px;
}
.m-head {
  left: 43px;
  top: 417px;
  width: 1455px;
  height: 54px;
}
.m-sheet {
  left: 102px;
  bottom: 1px;
  width: 108px;
  height: 36px;
}
.remark {
  position: absolute;
  left: 1503px;
  top: 425px;
  display: flex;
  align-items: center;
  gap: 9px;
  color: #ff2210;
  font-size: 32px;
  line-height: 40px;
  white-space: nowrap;
}
.remark span {
  padding-bottom: 4px;
}
.edge-handle {
  position: absolute;
  right: 0;
  bottom: 33px;
  width: 5px;
  height: 87px;
  border-radius: 5px 0 0 5px;
  background: #3a4048;
}
.corner-note {
  position: absolute;
  right: 0;
  bottom: 0;
}
.watermark {
  position: absolute;
  right: 14px;
  bottom: 9px;
  color: #8c8c8c;
  font-size: 19px;
  line-height: 24px;
  text-shadow: 1px 1px 0 #fff;
}
</style>
